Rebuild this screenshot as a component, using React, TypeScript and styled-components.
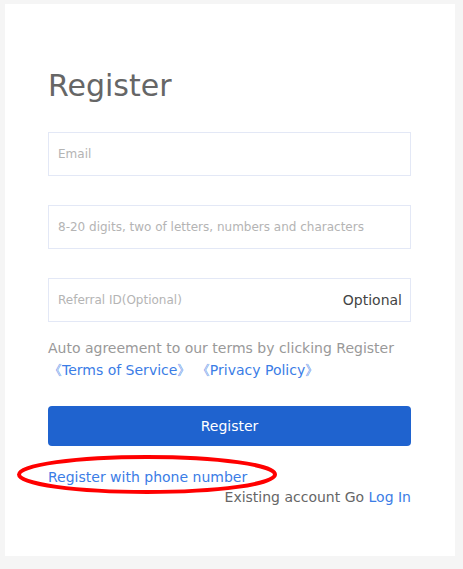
import React from "react";
import styled, { createGlobalStyle } from "styled-components";

const Global = createGlobalStyle`
  html, body { margin: 0; padding: 0; background: #f5f5f5; }
  body { font-family: "DejaVu Sans", Verdana, sans-serif; }
  * { box-sizing: border-box; }
`;

const Page = styled.div`
  padding: 4px 8px 13px 5px;
`;

const Card = styled.div`
  position: relative;
  width: 450px;
  height: 552px;
  background: #fff;
  padding: 62px 44px 0 43px;
  display: flex;
  flex-direction: column;
`;

const Title = styled.h1`
  margin: 0;
  font-size: 30px;
  font-weight: 400;
  color: #666;
  line-height: 40px;
`;

const Fields = styled.div`
  margin-top: 26px;
  display: flex;
  flex-direction: column;
  gap: 29px;
`;

const Field = styled.div`
  height: 44px;
  border: 1px solid #e3e8f6;
  display: flex;
  align-items: center;
  padding: 0 8px 0 9px;
`;

const Input = styled.input`
  flex: 1;
  border: none;
  outline: none;
  background: transparent;
  font-family: "DejaVu Sans", Verdana, sans-serif;
  font-size: 12px;
  color: #333;
  padding: 0;
  &::placeholder { color: #b4b4b4; }
`;

const Suffix = styled.span`
  font-size: 14px;
  color: #444;
`;

const Terms = styled.div`
  margin-top: 15px;
  font-size: 14px;
  line-height: 22px;
  color: #999;
`;

const Link = styled.a`
  color: #3b7de6;
  text-decoration: none;
  cursor: pointer;
`;

const Button = styled.button`
  margin-top: 25px;
  height: 40px;
  width: 100%;
  border: none;
  border-radius: 4px;
  background: #1f63cf;
  color: #fff;
  font-family: "DejaVu Sans", Verdana, sans-serif;
  font-size: 14px;
`;

const Footer = styled.div`
  margin-top: 21px;
  display: flex;
  flex-direction: column;
  font-size: 14px;
  line-height: 20px;
`;

const Existing = styled.div`
  align-self: flex-end;
  color: #666;
`;

const Circle = styled.svg`
  position: absolute;
  left: 5px;
  top: 448px;
  pointer-events: none;
`;

export default function App() {
  return (
    <>
      <Global />
      <Page>
        <Card>
          <Title>Register</Title>
          <Fields>
            <Field>
              <Input placeholder="Email" />
            </Field>
            <Field>
              <Input type="password" placeholder="8-20 digits, two of letters, numbers and characters" />
            </Field>
            <Field>
              <Input placeholder="Referral ID(Optional)" />
              <Suffix>Optional</Suffix>
            </Field>
          </Fields>
          <Terms>
            Auto agreement to our terms by clicking Register
            <br />
            <Link>《Terms of Service》</Link> <Link>《Privacy Policy》</Link>
          </Terms>
          <Button>Register</Button>
          <Footer>
            <Link>Register with phone number</Link>
            <Existing>
              Existing account Go <Link>Log In</Link>
            </Existing>
          </Footer>
          <Circle width="274" height="45" viewBox="0 0 274 45">
            <ellipse cx="137" cy="22.5" rx="128" ry="17.5" fill="none" stroke="#ff0000" strokeWidth="4" />
          </Circle>
        </Card>
      </Page>
    </>
  );
}
